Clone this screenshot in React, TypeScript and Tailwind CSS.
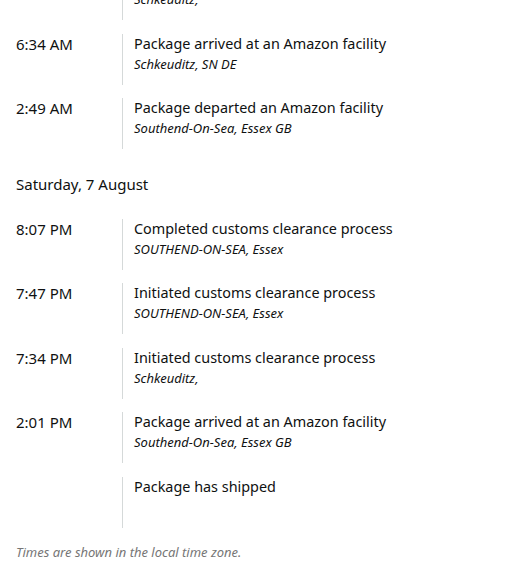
const font = { fontFamily: '"Noto Sans", "Open Sans", Arial, sans-serif' };

type Event = { time?: string; title?: string; place?: string };

function Row({ time, title, place }: Event) {
  return (
    <div className="flex h-[50px] mb-[14.5px]">
      <div className="w-[122px] pl-4 -mt-[1px] text-[15px] leading-[20px] text-[#0f1111]">{time}</div>
      <div className="border-l border-[#d5d9d9] pl-[11px] -mt-[1px]">
        {title && <div className="text-[14.4px] leading-[20px] text-[#0f1111]">{title}</div>}
        {place && <div className="text-[13px] leading-[20px] italic text-[#0f1111]">{place}</div>}
      </div>
    </div>
  );
}

export default function App() {
  return (
    <div className="w-[507px] h-[574px] overflow-hidden bg-white" style={font}>
      <div className="-mt-[30px]">
        <div className="flex h-[50px] mb-[14.5px]">
          <div className="w-[122px]" />
          <div className="border-l border-[#d5d9d9] pl-[11px] pt-[19px]">
            <div className="text-[13px] leading-[20px] italic text-[#0f1111]">Schkeuditz,</div>
          </div>
        </div>
        <Row time="6:34 AM" title="Package arrived at an Amazon facility" place="Schkeuditz, SN DE" />
        <Row time="2:49 AM" title="Package departed an Amazon facility" place="Southend-On-Sea, Essex GB" />
        <div className="pl-4 pt-[10px] pb-[26px] text-[15px] leading-[20px] text-[#0f1111]">Saturday, 7 August</div>
        <Row time="8:07 PM" title="Completed customs clearance process" place="SOUTHEND-ON-SEA, Essex" />
        <Row time="7:47 PM" title="Initiated customs clearance process" place="SOUTHEND-ON-SEA, Essex" />
        <Row time="7:34 PM" title="Initiated customs clearance process" place="Schkeuditz," />
        <Row time="2:01 PM" title="Package arrived at an Amazon facility" place="Southend-On-Sea, Essex GB" />
        <Row title="Package has shipped" />
        <div className="pl-4 mt-[1px] text-[13px] leading-[20px] italic text-[#767676]">Times are shown in the local time zone.</div>
      </div>
    </div>
  );
}
